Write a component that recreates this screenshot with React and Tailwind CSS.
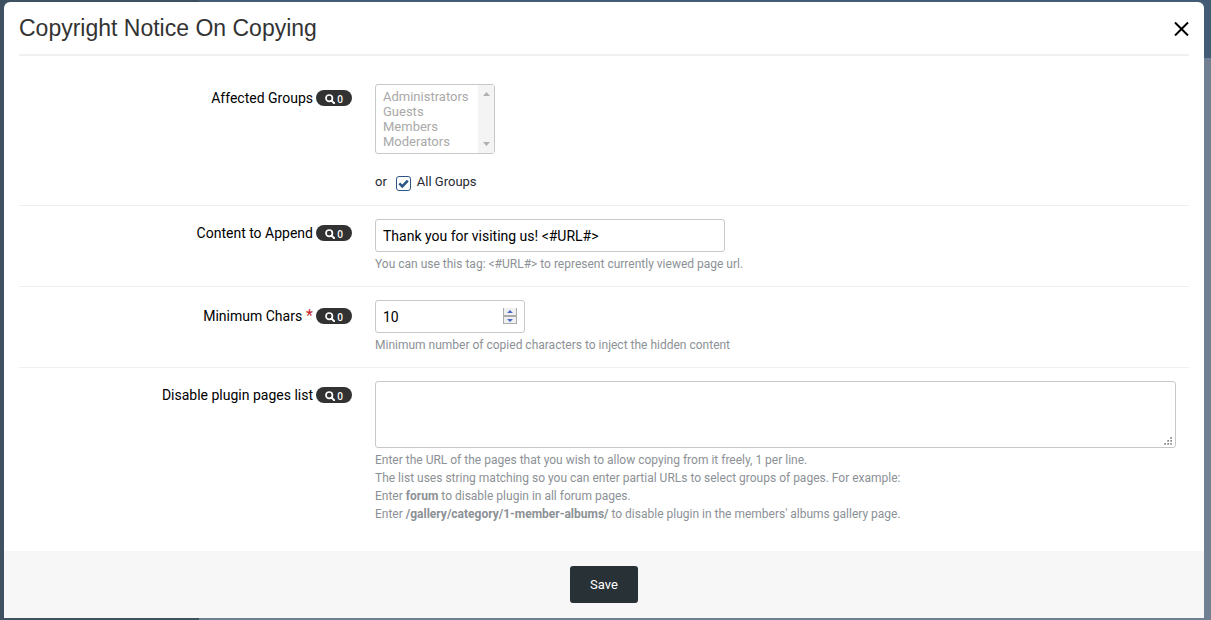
import { useState } from 'react';

const GROUPS = ['Administrators', 'Guests', 'Members', 'Moderators'];

const Backdrop = () => (
    <div className="absolute inset-0 flex flex-col bg-[#707f91]" aria-hidden="true">
        <div className="h-[58px] shrink-0 bg-[#435b75]" />
        <div className="absolute inset-y-0 left-0 w-[199px] bg-[#3f5060]" />
    </div>
);

const SearchIcon = () => (
    <svg className="size-[10px]" viewBox="0 0 10 10" fill="none" stroke="currentColor" strokeWidth="1.7">
        <circle cx="4.2" cy="4.2" r="3.2" />
        <path d="M6.6 6.6 9.2 9.2" strokeWidth="2" strokeLinecap="round" />
    </svg>
);

const CountBadge = () => (
    <span className="flex h-4 w-9 shrink-0 items-center justify-center gap-[2px] rounded-full bg-[#323232] pt-px font-['Open_Sans',sans-serif] text-[10px] leading-4 font-semibold text-white">
        <SearchIcon />
        0
    </span>
);

const FormRow = ({ label, htmlFor, required, last, children }) => (
    <div className={last ? 'flex gap-[23px] py-[13px]' : 'flex gap-[23px] border-b border-[#f0f0f0] py-[13px]'}>
        <div className={`flex w-[333px] shrink-0 items-center justify-end gap-[3px] ${required ? 'h-8' : 'h-7'}`}>
            <label htmlFor={htmlFor} className="text-sm leading-5 text-black">
                {label}
                {required && <span className="text-base leading-5 text-[#c7282d]"> *</span>}
            </label>
            <CountBadge />
        </div>
        <div className="min-w-0 flex-1 pr-[13px]">{children}</div>
    </div>
);

const Help = ({ children }) => (
    <div className="mt-[3px] text-xs leading-[18px] text-[#8c9196]">{children}</div>
);

const GroupSelect = ({ disabled }) => (
    <div className="relative h-[70px] w-[120px]">
        <select
            id="groups"
            multiple
            size={4}
            disabled={disabled}
            className="block h-full w-full overflow-hidden rounded-[3px] border border-[#c8c8c8] bg-white py-1 pl-[5px] text-[13px] leading-[15px] text-[#a9a9a9] opacity-100"
        >
            {GROUPS.map((group) => (
                <option key={group} className="h-[15px] min-h-0 px-[2px] py-0 leading-[15px] text-[#a9a9a9]">
                    {group}
                </option>
            ))}
        </select>
        <div className="pointer-events-none absolute inset-y-px right-px flex w-4 flex-col items-center justify-between bg-[#f4f4f4] py-[7px]">
            <svg className="h-1 w-[7px]" viewBox="0 0 7 4" fill="#b0b0b0"><path d="M0 4 3.5 0 7 4z" /></svg>
            <svg className="h-1 w-[7px]" viewBox="0 0 7 4" fill="#b0b0b0"><path d="M0 0 3.5 4 7 0z" /></svg>
        </div>
    </div>
);

const Spinner = () => (
    <svg className="pointer-events-none absolute top-2 right-2 h-4 w-[14px]" viewBox="0 0 14 16">
        <path fill="#ababab" d="M0 0h14v16H0z" />
        <path fill="#f0f0f0" d="M1 0h12v7H1zM1 9h12v6H1z" />
        <path fill="#4a69c4" d="M4 5 7 2l3 3zM4 11h6l-3 3z" />
    </svg>
);

const ResizeGrip = () => (
    <svg className="pointer-events-none absolute right-1 bottom-[3px] size-2" viewBox="0 0 8 8" fill="#b4b4b4">
        <path d="M6 0h2v2H6zM3 3h2v2H3zM6 3h2v2H6zM0 6h2v2H0zM3 6h2v2H3zM6 6h2v2H6z" />
        <path fill="#858585" d="M7 0h1v1H7zM4 3h1v1H4zM7 3h1v1H7zM1 6h1v1H1zM4 6h1v1H4zM7 6h1v1H7z" />
    </svg>
);

const App = () => {
    const [allGroups, setAllGroups] = useState(true);
    const [content, setContent] = useState('Thank you for visiting us! <#URL#>');
    const [minChars, setMinChars] = useState(10);
    const [pages, setPages] = useState('');

    return (
        <div className="relative min-h-screen pt-[2px] pr-[7px] pb-[2px] pl-1 font-['Roboto',sans-serif]">
            <Backdrop />
            <form
                onSubmit={(e) => e.preventDefault()}
                className="relative rounded-t-md bg-white"
            >
                <header className="mx-[15px] flex h-[54px] items-center justify-between border-b-2 border-[#f0f0f0]">
                    <h1 className="font-['Liberation_Sans',sans-serif] text-[23px] text-[#333333]">
                        Copyright Notice On Copying
                    </h1>
                    <button type="button" aria-label="Close" className="text-black">
                        <svg className="size-4" viewBox="0 0 16 16" fill="none" stroke="currentColor" strokeWidth="2">
                            <path d="M2 2.5 15 15.5M15 2.5 2 15.5" />
                        </svg>
                    </button>
                </header>

                <div className="px-[15px] py-[15px]">
                    <FormRow label="Affected Groups" htmlFor="groups">
                        <GroupSelect disabled={allGroups} />
                        <div className="mt-[18px] flex h-5 items-center text-[13px] text-[#272a34]">
                            or
                            <label className="ml-[9px] flex items-center gap-[6px]">
                                <span className="relative mt-[3px] size-[15px]">
                                    <input
                                        type="checkbox"
                                        checked={allGroups}
                                        onChange={(e) => setAllGroups(e.target.checked)}
                                        className="peer block size-[15px] appearance-none rounded-[3px] border border-[#2d5688] bg-white"
                                    />
                                    <svg className="pointer-events-none absolute inset-0 hidden peer-checked:block" viewBox="0 0 15 15" fill="none" stroke="#2d5688" strokeWidth="2.6">
                                        <path d="M3.3 7.4 6.3 10.4 11.8 4.6" />
                                    </svg>
                                </span>
                                All Groups
                            </label>
                        </div>
                    </FormRow>

                    <FormRow label="Content to Append" htmlFor="content">
                        <input
                            id="content"
                            type="text"
                            value={content}
                            onChange={(e) => setContent(e.target.value)}
                            className="block h-[33px] w-[350px] rounded-[3px] border border-[#c8c8c8] bg-white px-[7px] text-sm text-black"
                        />
                        <Help>You can use this tag: &lt;#URL#&gt; to represent currently viewed page url.</Help>
                    </FormRow>

                    <FormRow label="Minimum Chars" htmlFor="min-chars" required>
                        <div className="relative w-[150px]">
                            <input
                                id="min-chars"
                                type="number"
                                value={minChars}
                                onChange={(e) => setMinChars(e.target.value)}
                                className="block h-[33px] w-full [appearance:textfield] rounded-[3px] border border-[#c8c8c8] bg-white px-[7px] text-sm text-black"
                            />
                            <Spinner />
                        </div>
                        <Help>Minimum number of copied characters to inject the hidden content</Help>
                    </FormRow>

                    <FormRow label="Disable plugin pages list" htmlFor="pages" last>
                        <div className="relative">
                            <textarea
                                id="pages"
                                value={pages}
                                onChange={(e) => setPages(e.target.value)}
                                className="block h-[67px] w-full resize-none rounded-[3px] border border-[#c8c8c8] bg-white px-[7px] py-1 text-sm text-black"
                            />
                            <ResizeGrip />
                        </div>
                        <Help>
                            Enter the URL of the pages that you wish to allow copying from it freely, 1 per line.
                            <br />
                            The list uses string matching so you can enter partial URLs to select groups of pages. For example:
                            <br />
                            Enter <b>forum</b> to disable plugin in all forum pages.
                            <br />
                            Enter <b>/gallery/category/1-member-albums/</b> to disable plugin in the members' albums gallery page.
                        </Help>
                    </FormRow>
                </div>

                <footer className="flex justify-center bg-[#f7f7f7] py-[15px]">
                    <button type="submit" className="h-[37px] rounded-[3px] bg-[#283135] px-5 text-[13px] text-white">
                        Save
                    </button>
                </footer>
            </form>
        </div>
    );
};

export default App;
